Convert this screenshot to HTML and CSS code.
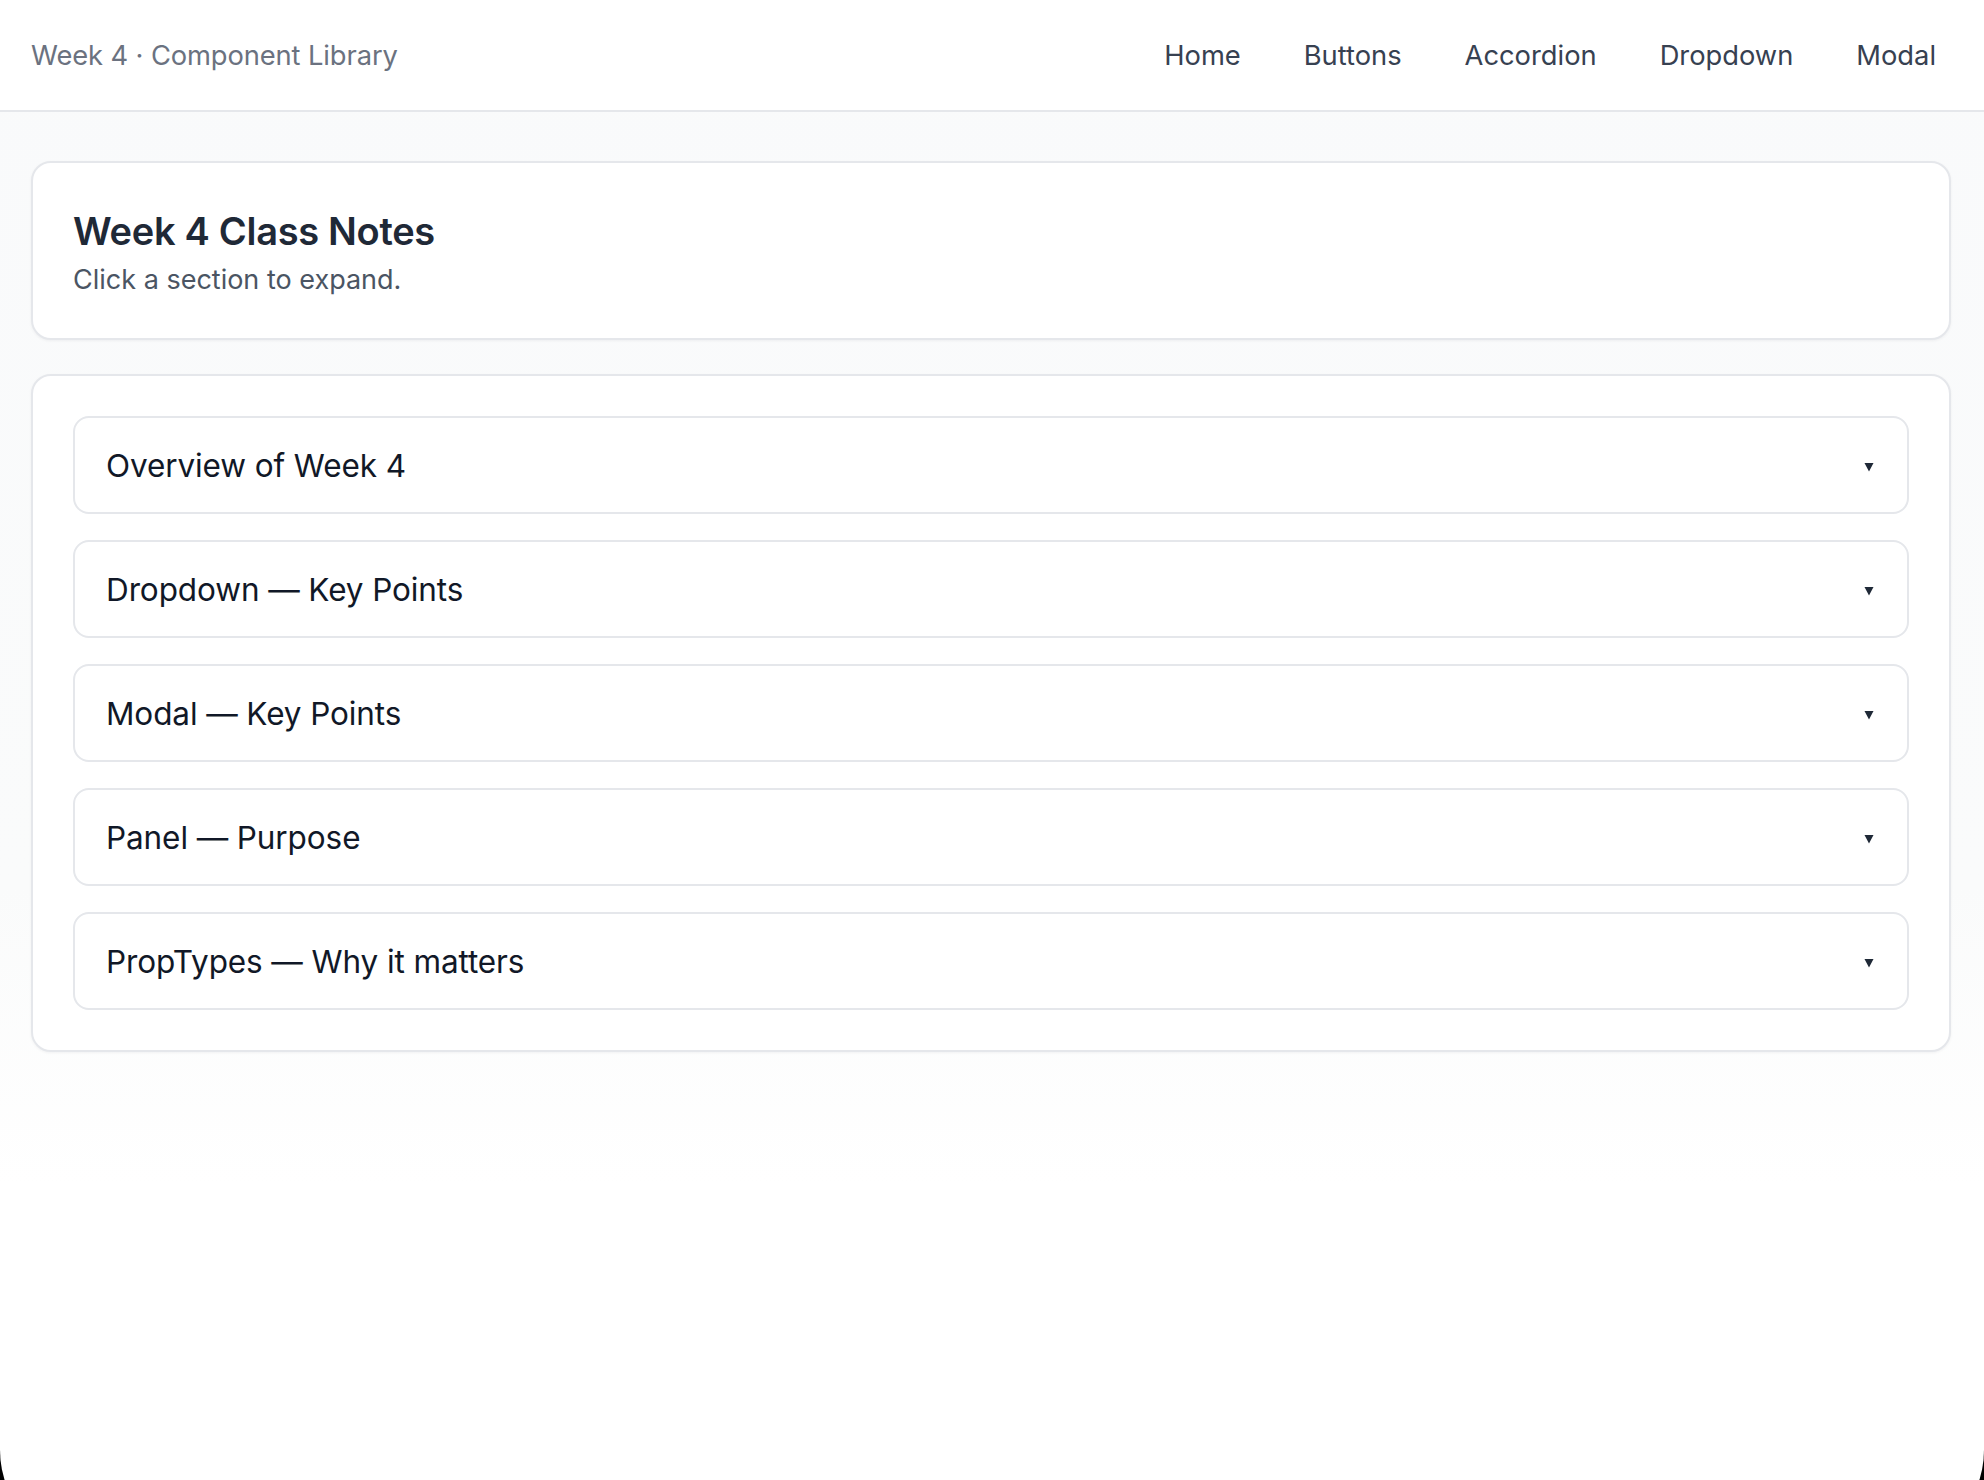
FILE: index.html
```html
<!DOCTYPE html>
<html lang="en">
<head>
<meta charset="utf-8">
<title>Week 4 · Component Library</title>
<link rel="stylesheet" href="styles.css">
</head>
<body>
  <header class="topbar">
    <div class="brand">Week 4 · Component Library</div>
    <nav class="links">
      <a href="#" class="link">Home</a>
      <a href="#" class="link">Buttons</a>
      <a href="#" class="link">Accordion</a>
      <a href="#" class="link">Dropdown</a>
      <a href="#" class="link">Modal</a>
    </nav>
  </header>
  <main class="main">
    <section class="card intro">
      <h1 class="title">Week 4 Class Notes</h1>
      <p class="subtitle">Click a section to expand.</p>
    </section>
    <section class="card accordion">
      <button class="item"><span class="item-title">Overview of Week 4</span><svg class="chev" viewBox="0 0 10 10"><polygon points="0.5,1 9.5,1 5,9.5"/></svg></button>
      <button class="item"><span class="item-title">Dropdown — Key Points</span><svg class="chev" viewBox="0 0 10 10"><polygon points="0.5,1 9.5,1 5,9.5"/></svg></button>
      <button class="item"><span class="item-title">Modal — Key Points</span><svg class="chev" viewBox="0 0 10 10"><polygon points="0.5,1 9.5,1 5,9.5"/></svg></button>
      <button class="item"><span class="item-title">Panel — Purpose</span><svg class="chev" viewBox="0 0 10 10"><polygon points="0.5,1 9.5,1 5,9.5"/></svg></button>
      <button class="item"><span class="item-title">PropTypes — Why it matters</span><svg class="chev" viewBox="0 0 10 10"><polygon points="0.5,1 9.5,1 5,9.5"/></svg></button>
    </section>
  </main>
  <div class="frame"></div>
</body>
</html>
```

FILE: styles.css
```css
* { box-sizing: border-box; }

html, body {
  margin: 0;
  padding: 0;
}

body {
  min-height: 100vh;
  font-family: Inter, "Noto Sans", "Liberation Sans", sans-serif;
  background: linear-gradient(#f9fafb 0%, #fafbfb 60%, #ffffff 80%, #ffffff 100%);
  color: #111827;
}

.topbar {
  height: 112px;
  background: #ffffff;
  border-bottom: 2px solid #e5e7eb;
  display: flex;
  align-items: center;
  justify-content: space-between;
  padding: 0 48px 0 31px;
}

.brand {
  font-size: 27.3px;
  color: #6b7280;
  letter-spacing: -0.1px;
}

.links {
  display: flex;
  gap: 63px;
}

.link {
  font-size: 27.3px;
  color: #374151;
  text-decoration: none;
}

.main {
  padding: 49px 33px 0 31px;
  display: flex;
  flex-direction: column;
  gap: 34px;
}

.card {
  background: #ffffff;
  border: 2px solid #e5e7eb;
  border-radius: 20px;
  box-shadow: 0 1px 3px rgba(17, 24, 39, 0.05);
}

.intro {
  padding: 40px 40px 40px 40px;
}

.title {
  margin: 0;
  font-size: 38px;
  line-height: 56px;
  font-weight: 600;
  color: #1f2937;
  letter-spacing: -0.3px;
}

.subtitle {
  margin: 2px 0 0 0;
  font-size: 27px;
  line-height: 37px;
  color: #4b5563;
}

.accordion {
  padding: 40px;
  display: flex;
  flex-direction: column;
  gap: 26px;
}

.item {
  height: 98px;
  width: 100%;
  display: flex;
  align-items: center;
  justify-content: space-between;
  padding: 0 33px 0 31px;
  background: #ffffff;
  border: 2px solid #e5e7eb;
  border-radius: 16px;
  font-family: inherit;
  cursor: pointer;
  text-align: left;
}

.item-title {
  font-size: 31.5px;
  color: #111827;
  font-weight: 400;
  letter-spacing: -0.1px;
}

.chev {
  width: 10px;
  height: 10px;
  fill: #1f2937;
  margin-top: 4px;
}

.frame {
  position: fixed;
  left: 0;
  right: 0;
  top: -100px;
  bottom: -70px;
  border-radius: 100px;
  box-shadow: 0 0 0 120px #000;
  pointer-events: none;
}
```
